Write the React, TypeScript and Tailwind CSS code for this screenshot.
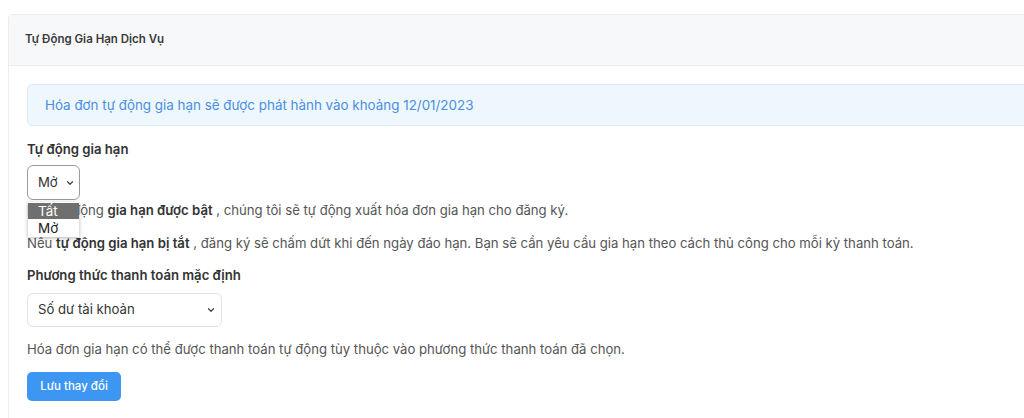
import { ChevronDown } from "lucide-react";

const font = { fontFamily: "Inter, 'Noto Sans', sans-serif" };

export default function App() {
  return (
    <div className="w-full h-[418px] bg-white overflow-hidden pt-[14px] pl-[8px]" style={font}>
      <div className="w-[1040px] border border-[#ececec] rounded-tl-[4px] bg-white">
        {/* header */}
        <div className="h-[51px] flex items-center px-[16px] bg-[#f7f8fa] border-b border-[#ebebeb]">
          <span className="text-[11.5px] font-semibold text-[#3a3a3a]">Tự Động Gia Hạn Dịch Vụ</span>
        </div>

        <div className="px-[18px] pt-[18px] pb-[20px] text-[#555]">
          {/* alert */}
          <div className="h-[42px] flex items-center px-[17px] bg-[#eef6fe] border border-[#dbeafb] rounded-[5px]">
            <span className="text-[13.4px] text-[#4a8fe2]">Hóa đơn tự động gia hạn sẽ được phát hành vào khoảng 12/01/2023</span>
          </div>

          <div className="mt-[13px] text-[13.15px] font-semibold text-[#333] leading-[20px]">Tự động gia hạn</div>

          <div className="relative mt-[6px]">
            <div className="w-[53px] h-[35px] flex items-center justify-between pl-[10px] pr-[4px] border border-[#9a9a9a] rounded-[6px] text-[13.15px] text-[#333]">
              <span>Mở</span>
              <ChevronDown size={10} strokeWidth={3} className="text-[#444]" />
            </div>
            {/* open dropdown list */}
            <div className="absolute left-[1px] top-[37px] w-[51px] bg-white shadow-[0_1px_4px_rgba(0,0,0,0.3)] text-[13.5px] leading-[16px] text-[#222] z-10 py-[1px]">
              <div className="bg-[#6f6f6f] text-white px-[10px]">Tất</div>
              <div className="px-[10px] pt-[1px]">Mở</div>
            </div>
          </div>

          <p className="mt-0 text-[13.15px] leading-[20px]">
            Nếu tự động <b className="font-semibold text-[#333]">gia hạn được bật</b> , chúng tôi sẽ tự động xuất hóa đơn gia hạn cho đăng ký.
          </p>
          <p className="mt-[13px] text-[13.15px] leading-[20px]">
            Nếu <b className="font-semibold text-[#333]">tự động gia hạn bị tắt</b> , đăng ký sẽ chấm dứt khi đến ngày đáo hạn. Bạn sẽ cần yêu cầu gia hạn theo cách thủ công cho mỗi kỳ thanh toán.
          </p>

          <div className="mt-[12px] text-[13.15px] font-semibold text-[#333] leading-[20px]">Phương thức thanh toán mặc định</div>

          <div className="mt-[8px] w-[195px] h-[34px] flex items-center justify-between pl-[10px] pr-[5px] border border-[#e3e3e3] rounded-[6px] text-[13.15px] text-[#333]">
            <span>Số dư tài khoản</span>
            <ChevronDown size={10} strokeWidth={3} className="text-[#444]" />
          </div>

          <p className="mt-[12px] text-[13.15px] leading-[20px]">
            Hóa đơn gia hạn có thể được thanh toán tự động tùy thuộc vào phương thức thanh toán đã chọn.
          </p>

          <button type="button" className="mt-[13px] w-[94px] h-[29px] rounded-[5px] bg-[#3d96f2] text-white text-[11.5px] font-medium">
            Lưu thay đổi
          </button>
        </div>
      </div>
    </div>
  );
}
